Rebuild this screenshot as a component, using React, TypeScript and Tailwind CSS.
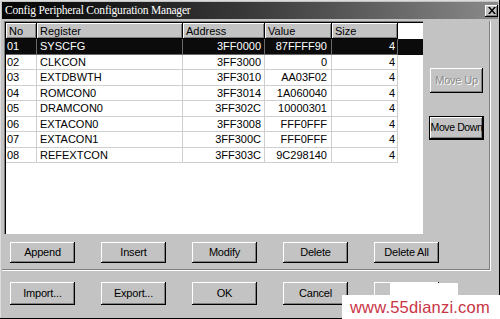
import React from "react";

type Row = { no: string; register: string; address: string; value: string; size: string };

const rows: Row[] = [
  { no: "01", register: "SYSCFG", address: "3FF0000", value: "87FFFF90", size: "4" },
  { no: "02", register: "CLKCON", address: "3FF3000", value: "0", size: "4" },
  { no: "03", register: "EXTDBWTH", address: "3FF3010", value: "AA03F02", size: "4" },
  { no: "04", register: "ROMCON0", address: "3FF3014", value: "1A060040", size: "4" },
  { no: "05", register: "DRAMCON0", address: "3FF302C", value: "10000301", size: "4" },
  { no: "06", register: "EXTACON0", address: "3FF3008", value: "FFF0FFF", size: "4" },
  { no: "07", register: "EXTACON1", address: "3FF300C", value: "FFF0FFF", size: "4" },
  { no: "08", register: "REFEXTCON", address: "3FF303C", value: "9C298140", size: "4" }
];

const columns = [
  { key: "no", label: "No", width: "w-[31px]", align: "text-left pl-[1px]" },
  { key: "register", label: "Register", width: "w-[146px]", align: "text-left pl-[3px]" },
  { key: "address", label: "Address", width: "w-[82px]", align: "text-right pr-[3px]" },
  { key: "value", label: "Value", width: "w-[67px]", align: "text-right pr-[4px]" },
  { key: "size", label: "Size", width: "w-[66px]", align: "text-right pr-[2px]" }
] as const;

const raised =
  "bg-[#c3c3c3] shadow-[inset_-1px_-1px_#000,inset_1px_1px_#fff,inset_-2px_-2px_#808080]";

function WinButton({
  label,
  className = "",
  disabled = false,
  focused = false
}: {
  label: string;
  className?: string;
  disabled?: boolean;
  focused?: boolean;
}) {
  return (
    <div
      className={`${raised} flex items-center justify-center whitespace-nowrap text-[11px] tracking-[-0.2px] ${
        focused ? "outline outline-1 outline-black" : ""
      } ${
        disabled ? "text-[#8a8a8a] [text-shadow:1px_1px_0_#fff]" : "text-black"
      } ${className}`}
    >
      {label}
    </div>
  );
}

export default function App() {
  return (
    <div
      className="relative w-[500px] h-[319px] overflow-hidden bg-[#c3c3c3] p-[2px] shadow-[inset_-1px_-1px_#000,inset_1px_1px_#dcdcdc]"
      style={{ fontFamily: '"Liberation Sans", Arial, sans-serif' }}
    >
      {/* title bar */}
      <div className="flex h-[17px] items-center justify-between bg-gradient-to-r from-[#050505] via-[#3a3a3a] to-[#8a8a8a] pl-[3px]">
        <span
          className="text-[11.5px] leading-none text-white tracking-[-0.2px]"
          style={{ fontFamily: '"Liberation Serif", "Times New Roman", serif' }}
        >
          Config Peripheral Configuration Manager
        </span>
        <div className={`${raised} flex h-[12px] w-[13px] items-center justify-center`}>
          <svg width="8" height="7" viewBox="0 0 8 7">
            <path d="M0 0h2l2 2.5L6 0h2L5 3.5 8 7H6L4 4.5 2 7H0l3-3.5z" fill="#000" />
          </svg>
        </div>
      </div>

      {/* group frame */}
      <div className="mt-[2px] h-[250px] w-[489px] shadow-[inset_-1px_-1px_#fff,inset_-2px_-2px_#808080]">
        <div className="flex">
          {/* list */}
          <div className="ml-[2px] h-[213px] w-[419px] bg-white shadow-[inset_1px_1px_#808080,inset_2px_2px_#000,inset_-1px_-1px_#fff] pl-[2px] pt-[2px]">
            <div className="flex h-[16px]">
              {columns.map((c) => (
                <div
                  key={c.key}
                  className={`${c.width} ${raised} flex items-center pl-[3px] text-[11px] text-black`}
                >
                  {c.label}
                </div>
              ))}
            </div>
            {rows.map((r, i) => {
              const sel = i === 0;
              return (
                <div
                  key={r.no}
                  className={`flex h-[15.5px] ${sel ? "bg-[#0b0b0b] text-white" : "text-black"}`}
                >
                  {columns.map((c) => (
                    <div
                      key={c.key}
                      className={`${c.width} ${c.align} border-r border-b ${
                        sel ? "border-[#6a6a6a]" : "border-[#cfcfcf]"
                      } text-[11px] leading-[14.5px] whitespace-nowrap`}
                    >
                      {r[c.key]}
                    </div>
                  ))}
                </div>
              );
            })}
          </div>

          {/* side buttons */}
          <div className="flex w-[68px] flex-col pl-[7px]">
            <WinButton label="Move Up" disabled className="mt-[47px] h-[25px] w-[53px]" />
            <WinButton
              label="Move Down"
              focused
              className="mt-[24px] h-[22px] w-[53px] !text-[10.5px] !tracking-[-0.4px]"
            />
          </div>
        </div>

        <div className="mt-[8px] flex gap-[26px] pl-[8px]">
          {["Append", "Insert", "Modify", "Delete", "Delete All"].map((b) => (
            <WinButton key={b} label={b} className="h-[21px] w-[65px]" />
          ))}
        </div>
      </div>

      {/* bottom buttons */}
      <div className="mt-[11px] flex gap-[26px] pl-[8px]">
        {["Import...", "Export...", "OK", "Cancel", ""].map((b, i) => (
          <WinButton key={i} label={b} className="h-[23px] w-[65px]" />
        ))}
      </div>

      {/* watermark */}
      <div className="absolute left-[390px] top-[283px] h-[12px] w-[68px] bg-white" />
      <div className="absolute left-[342px] top-[295px] flex h-[24px] w-[158px] items-center bg-white pl-[8px]">
        <span className="text-[16.5px] leading-none tracking-[0.2px] text-[#c93445]">
          www.55dianzi.com
        </span>
      </div>
    </div>
  );
}
